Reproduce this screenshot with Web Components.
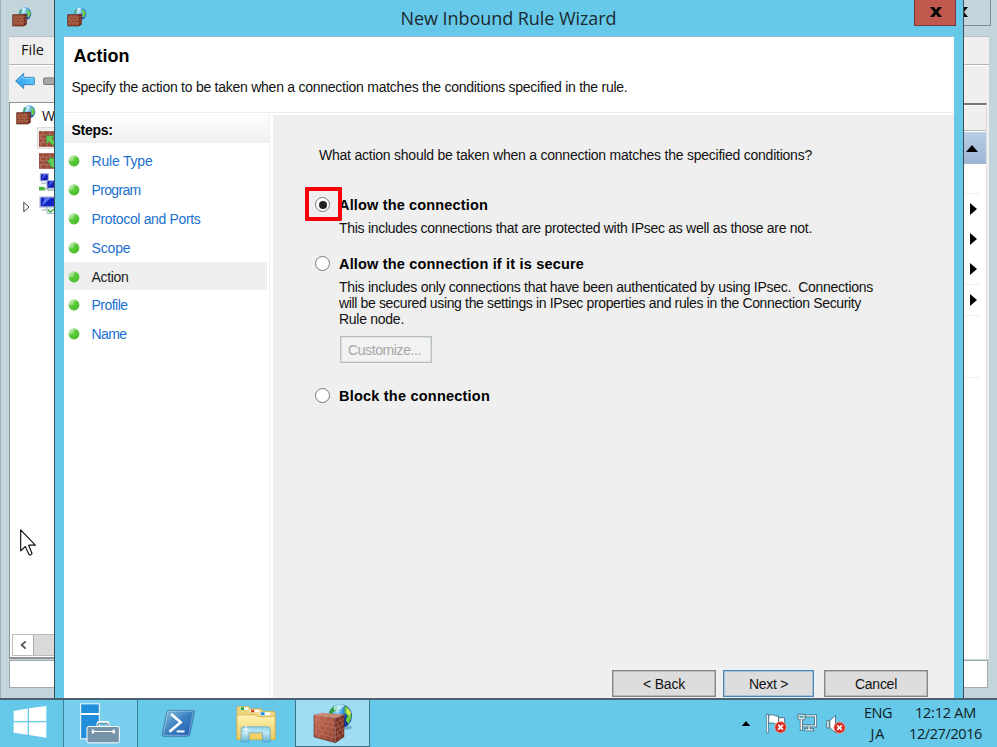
<!DOCTYPE html>
<html lang="en">
<head>
<meta charset="utf-8">
<title>New Inbound Rule Wizard</title>
<style>
html,body{margin:0;padding:0;width:997px;height:747px;overflow:hidden;background:#c3d4db;font-family:"Liberation Sans",Arial,sans-serif;font-size:14px;color:#111}
</style>
</head>
<body>
<desk-top></desk-top>
<script>
const define = (name, html, after) => {
  const t = document.createElement('template');
  t.innerHTML = html;
  customElements.define(name, class extends HTMLElement {
    connectedCallback() {
      if (this.shadowRoot) return;
      this.attachShadow({ mode: 'open' }).appendChild(t.content.cloneNode(true));
      if (after) after(this, this.shadowRoot);
    }
  });
};

/* One line of text, tracked so that it fills the width given in "w". */
define('fit-text', `<style>:host{display:inline-block;white-space:pre;line-height:1.15}</style><slot></slot>`, el => {
  const w = parseFloat(el.getAttribute('w'));
  el.style.letterSpacing = '0px';
  const n = el.textContent.length;
  const natural = el.getBoundingClientRect().width;
  if (w && natural) el.style.letterSpacing = ((w - natural) / n).toFixed(4) + 'px';
});

/* Icons */
const icons = {
  wall: `<svg viewBox="0 0 60 60"><defs><radialGradient id="g" cx=".35" cy=".3" r=".7"><stop offset="0" stop-color="#d4f2ff"/><stop offset=".55" stop-color="#4aa6ea"/><stop offset="1" stop-color="#1f4fb8"/></radialGradient></defs>
    <circle cx="39" cy="20" r="19" fill="url(#g)"/><path d="M22 12q3-6 9-7l2 5-5 4-2 7-4 1z" fill="#4aa57a"/><path d="M47 7q9 6 9 15l-5 10-5-4 2-8-4-6z" fill="#6fce4c"/><path d="M29 5q7-4 13-1l-2 5-9 2z" fill="#e8fbff" opacity=".7"/>
    <path d="M2 23l34-1 8-2v31l-8 6H2z" fill="#94452f"/><path d="M36 22l8-2v31l-8 6z" fill="#6b2d22"/>
    <path d="M2 30h34l8-2M2 39h34l8-3M2 48h34l8-4M12 23v7M25 23v7M7 30v9M19 30v9M30 30v9M12 39v9M25 39v9M7 48v8M19 48v8M30 48v8" stroke="#c98c78" stroke-width="1.3" fill="none"/><path d="M2 23h34M2 23v34h34l8-6" stroke="#5b2018" stroke-width="2" fill="none"/></svg>`,
  firewall: `<svg viewBox="336 20 125 125"><defs><radialGradient id="g" cx=".35" cy=".25"><stop offset="0" stop-color="#d8f7ff"/><stop offset=".4" stop-color="#4fb3ef"/><stop offset="1" stop-color="#10329d"/></radialGradient><linearGradient id="b" x2="1" y2="1"><stop offset="0" stop-color="#c9705a"/><stop offset="1" stop-color="#8e3f30"/></linearGradient></defs>
    <ellipse cx="434" cy="96" rx="22" ry="6" fill="#4c8ba5" opacity=".6"/><circle cx="420" cy="62" r="35" fill="url(#g)"/>
    <path d="M388 50q6-16 22-22l4 9-7 10-9 3-3 11-9 2z" fill="#2f9d3c"/><path d="M433 31q22 10 21 34l-9 21-9-12 6-13-9-9z" fill="#6bc83a"/><path d="M440 36l12 15-5 10-8-9z" fill="#d5ec55"/><path d="M400 34q18-13 34-3l-12 10-20 4z" fill="#d8f8ff" opacity=".75"/>
    <path d="M342 58l64 10v73l-64-17z" fill="url(#b)"/><path d="M406 68l26-11v66l-26 18z" fill="#7c3327"/><path d="M342 58l24-6 66 5-26 11z" fill="#c58a76"/>
    <path d="M342 71l64 12 26-13M342 84l64 14 26-14M342 98l64 14 26-15M342 111l64 15 26-16M357 60v14M375 63v14M393 66v15M349 73v13M366 76v14M384 80v14M398 82v14M357 87v15M375 91v15M393 95v15M349 100v13M366 103v14M384 108v14M398 111v14M357 115v13M375 119v14M393 124v14M419 62v15M426 74v14M413 80v15M419 91v15M427 100v14M413 109v14M419 118v14" stroke="#c98a76" stroke-width="1.3" fill="none"/><path d="M342 58v66l64 17 26-18" stroke="#4d1a13" stroke-width="1.5" fill="none"/></svg>`,
  back: `<svg viewBox="0 0 60 54"><defs><linearGradient id="a" x2="1"><stop offset="0" stop-color="#2d9ce8"/><stop offset="1" stop-color="#59c8fa"/></linearGradient></defs><path d="M2 27L26 4v12h30q2 0 2 2v18q0 2-2 2H26v12z" fill="url(#a)" stroke="#2b78b8" stroke-width="2.5" stroke-linejoin="round"/><path d="M9 26L24 12v7h30" fill="none" stroke="#a3e2ff" stroke-width="2"/></svg>`,
  fwd: `<svg viewBox="0 0 40 30"><rect x="2" y="3" width="46" height="22" rx="4" fill="#a6a6a6" stroke="#6d6d6d" stroke-width="3"/></svg>`,
  inb: `<svg viewBox="0 0 48 48"><rect width="48" height="48" fill="#9b4b3a"/><path d="M0 1h48M0 12h48M0 23h48M0 35h48M0 47h48M12 1v11M32 1v11M5 12v11M22 12v11M12 23v12M32 23v12M5 35v12M24 35v12" stroke="#c99482" stroke-width="1.6"/><path d="M22 14h24l-7 8 11 13-8 9-12-13-8 8z" fill="#5fcc52" stroke="#2b7f2b" stroke-width="1.5"/></svg>`,
  outb: `<svg viewBox="0 0 48 48"><rect width="48" height="48" fill="#9b4b3a"/><path d="M0 1h48M0 12h48M0 23h48M0 35h48M0 47h48M12 1v11M32 1v11M5 12v11M22 12v11M12 23v12M32 23v12M5 35v12M24 35v12" stroke="#c99482" stroke-width="1.6"/><path d="M36 12L24 27l8 2 2 12 16 5V22z" fill="#5fcc52" stroke="#2b7f2b" stroke-width="1.5"/></svg>`,
  nets: `<svg viewBox="0 0 48 56"><rect x="4" y="2" width="24" height="21" fill="#1420b8" stroke="#a9b4d8" stroke-width="3"/><path d="M8 18L13 4h10z" fill="#4d66ee"/><path d="M6 28h18v5H6z" fill="#bfc6cf"/><rect x="24" y="22" width="26" height="23" fill="#1420b8" stroke="#a9b4d8" stroke-width="3"/><path d="M28 40l6-16h10z" fill="#4d66ee"/><path d="M0 41h17v11H0z" fill="#49b53c"/><path d="M17 47h12M26 51h20" stroke="#9aa" stroke-width="4"/></svg>`,
  mon: `<svg viewBox="0 0 48 54"><rect x="3" y="3" width="50" height="30" fill="#1626c4" stroke="#b5bedd" stroke-width="4"/><path d="M8 30L18 5h18z" fill="#5a76f2"/><path d="M12 38h34v7H6z" fill="#cfd4da"/><rect x="24" y="33" width="26" height="19" fill="#e6f3ed" stroke="#7aa" stroke-width="2"/><path d="M27 41l7 7 16-12" stroke="#46a846" stroke-width="4" fill="none"/></svg>`,
  start: `<svg viewBox="0 0 102 98"><path d="M1 15l43-7v38H1zM48 7l53-7v46H48zM1 50h43v38L1 82zM48 50h53v47l-53-8z" fill="#fff"/></svg>`,
  server: `<svg viewBox="0 0 120 122"><path d="M2 2h56v29H2zM2 34h56v73H2z" fill="#218edb" stroke="#fff" stroke-width="3"/><path d="M54 72v-9q0-5 5-5h20q5 0 5 5v9" fill="none" stroke="#fff" stroke-width="9"/><path d="M54 72v-7q0-4 4-4h22q4 0 4 4v7" fill="none" stroke="#6d8ea6" stroke-width="4"/><rect x="21" y="70" width="97" height="49" rx="5" fill="#7594aa" stroke="#fff" stroke-width="3"/><path d="M38 85h64" stroke="#fff" stroke-width="3"/><path d="M33 85l9-6v12zM107 85l-9-6v12z" fill="#fff"/><path d="M38 78v14M102 78v14" stroke="#fff" stroke-width="3"/></svg>`,
  ps: `<svg viewBox="0 0 105 88"><defs><linearGradient id="p" x2="1" y2="1"><stop offset="0" stop-color="#8fc2de"/><stop offset=".5" stop-color="#3a80c0"/><stop offset="1" stop-color="#2058b0"/></linearGradient></defs><path d="M23 4h73q6 0 5 6L87 77q-1 6-7 6H8q-6 0-5-6L17 9q1-5 6-5z" fill="url(#p)" stroke="#3c7fae" stroke-width="2.5"/><path d="M25 7h69q4 0 3 4L84 75q-1 5-5 5H11q-5 0-4-5L20 11q1-4 5-4z" fill="none" stroke="#b9dcf0" stroke-width="1.5"/><path d="M30 15l29 25-34 29" fill="none" stroke="#fff" stroke-width="8"/><path d="M47 68h24" stroke="#fff" stroke-width="6"/></svg>`,
  folder: `<svg viewBox="0 0 120 112"><defs><linearGradient id="f" x2="0" y2="1"><stop offset="0" stop-color="#fff2b3"/><stop offset="1" stop-color="#edcb5a"/></linearGradient><linearGradient id="s" x2="0" y2="1"><stop offset="0" stop-color="#8ad6f5"/><stop offset=".4" stop-color="#bfe9fa"/><stop offset="1" stop-color="#5db4e2"/></linearGradient></defs>
    <path d="M2 22V5q0-4 4-4h32l5 7h33l5 8h33q4 0 4 4v79H2z" fill="#efd57c" stroke="#c4a24a" stroke-width="2"/><path d="M12 4h25v8H12z" fill="#fff"/><path d="M14 4h10v8H14z" fill="#13ae3c"/><path d="M42 11h28v8H42z" fill="#fff"/><path d="M45 11h10v8H45z" fill="#d8442a"/><path d="M71 19h32v9H71z" fill="#fff"/><path d="M74 19h12v9H74z" fill="#2291e0"/>
    <path d="M2 31q0-4 4-4h52l6 5h50q4 0 4 4v63q0 3-3 3H5q-3 0-3-3z" fill="url(#f)" stroke="#cda746" stroke-width="2"/><path d="M15 106V72q0-9 9-9h70q9 0 9 9v34q0 3-3 3H83q-3 0-3-3V81H39v25q0 3-3 3H18q-3 0-3-3z" fill="url(#s)" stroke="#4a9ac8" stroke-width="2" opacity=".94"/><path d="M30 48l2 19 10 3-10 3-2 19-2-19-10-3 10-3z" fill="#fff" opacity=".85"/></svg>`,
  flag: `<svg viewBox="0 0 62 62"><path d="M4 5v53" stroke="#fff" stroke-width="5"/><path d="M1 3h6v56H1z" fill="none" stroke="#3f6475" stroke-width="2"/><path d="M8 7q10-4 17 0 6 4 12 2v23q-7 3-13-1-7-4-16 0z" fill="#fff" stroke="#3f6475" stroke-width="2.5"/><path d="M37 14h18v20H38z" fill="#fff" stroke="#3f6475" stroke-width="2.5"/><circle cx="43" cy="42" r="17" fill="#d92b20" stroke="#f5b5ac" stroke-width="2"/><path d="M36 35l14 14M50 35L36 49" stroke="#fff" stroke-width="5"/></svg>`,
  net: `<svg viewBox="0 0 60 56"><path d="M21 8h35v30H14V22" fill="none" stroke="#31596a" stroke-width="8"/><path d="M21 8h35v30H14V22" fill="none" stroke="#fff" stroke-width="4"/><path d="M36 38v11M22 50h29" stroke="#31596a" stroke-width="8"/><path d="M36 38v11M24 50h25" stroke="#fff" stroke-width="4"/><rect x="3" y="3" width="21" height="17" rx="3" fill="#fff" stroke="#31596a" stroke-width="2.5"/><path d="M8 8h11v6H8z" fill="#58b6d7" stroke="#31596a"/><path d="M13 20v32" stroke="#31596a" stroke-width="9"/><path d="M13 19v31" stroke="#fff" stroke-width="5"/></svg>`,
  sound: `<svg viewBox="0 0 62 60"><path d="M2 20h7v22H2zM11 20L28 4v52L11 42z" fill="#fff" stroke="#3f6475" stroke-width="2.5"/><circle cx="40" cy="41" r="17" fill="#d92b20" stroke="#f5b5ac" stroke-width="2"/><path d="M33 34l14 14M47 34L33 48" stroke="#fff" stroke-width="5"/></svg>`,
  up: `<svg viewBox="0 0 12 7"><path d="M0 7l6-7 6 7z" fill="#000"/></svg>`,
  right: `<svg viewBox="0 0 7 12"><path d="M0 0l7 6-7 6z" fill="#000"/></svg>`,
  expand: `<svg viewBox="0 0 7 12"><path d="M.8 1.2L6 6 .8 10.8z" fill="#fff" stroke="#444"/></svg>`,
  ball: `<svg viewBox="0 0 12 12"><defs><linearGradient id="l" x2=".8" y2="1"><stop offset=".1" stop-color="#d8f2d0"/><stop offset=".5" stop-color="#5ccc38"/><stop offset="1" stop-color="#48b32a"/></linearGradient></defs><circle cx="6" cy="6" r="5.4" fill="#56c736"/><path d="M6 .6A5.4 5.4 0 0 0 .6 6h5z" fill="#b6e7a5"/><circle cx="6" cy="6" r="5.2" fill="url(#l)" opacity=".65"/></svg>`,
  x: `<svg viewBox="0 0 12 10"><path d="M0 0h4l2 3 2-3h4L8 4.9 12 10H8L6 7l-2 3H0l4-5.1z" fill="#080808"/></svg>`,
  left: `<svg viewBox="0 0 8 10"><path d="M6.5.8L1.8 5l4.7 4.2" fill="none" stroke="#555" stroke-width="2"/></svg>`,
  cursor: `<svg viewBox="0 0 48 80"><path d="M2 2v63l14-13 11 24q5 4 9-3L26 48h20z" fill="#fff" stroke="#111" stroke-width="3.5" stroke-linejoin="round"/></svg>`
};
/* w / h set the drawn size, the name picks the artwork. */
define('ui-icon', `<style>:host{display:block;flex:none}svg{display:block;width:100%;height:100%}</style>`, (el, root) => {
  el.style.width = el.getAttribute('w') + 'px';
  el.style.height = el.getAttribute('h') + 'px';
  root.innerHTML += icons[el.getAttribute('name')];
});

define('push-button', `<style>
:host{display:flex;box-sizing:border-box;height:27px;align-items:center;justify-content:center;background:#dddddd;border:1px solid #868686;box-shadow:inset 0 0 0 .5px #999;color:#111;padding-top:2px}
:host([primary]){border-color:#4687bb;box-shadow:inset 0 0 0 .5px #78a7cc}
:host([disabled]){background:#f2f2f2;border-color:#b7bec1;color:#a6a6a6;box-shadow:inset 0 0 0 .5px #c6cbcd}
</style><slot></slot>`);

define('radio-mark', `<style>
:host{display:flex;flex:none;box-sizing:border-box;width:15px;height:15px;border:1.4px solid #777;border-radius:50%;background:#fff;align-items:center;justify-content:center}
:host([checked])::before{content:"";width:8px;height:8px;border-radius:50%;background:#222}
</style>`);

/* A radio choice: mark, bold caption and, below it, its description. */
define('rule-choice', `<style>
:host{display:grid;grid-template-columns:24px 1fr;align-items:start}
.cap{font-weight:bold;font-size:14.5px;color:#000;height:23px;padding-top:0;box-sizing:border-box}
.body{grid-column:2;display:flex;flex-direction:column;align-items:flex-start;line-height:16px}
</style><radio-mark></radio-mark><div class="cap"><slot name="cap"></slot></div><div class="body"><slot></slot></div>`, (el, root) => {
  if (el.hasAttribute('checked')) root.querySelector('radio-mark').setAttribute('checked', '');
});

define('wizard-step', `<style>
:host{display:flex;align-items:center;height:28.8px;margin-right:2px;padding:1px 0 0 4px;gap:11.5px;color:#1a6fd0;box-sizing:border-box}
:host([current]){background:#efefef;color:#222}
</style><ui-icon name="ball" w="12" h="12"></ui-icon><slot></slot>`);

define('wizard-window', `<style>
:host{display:flex;flex-direction:column;box-sizing:border-box;background:#66c9ea;border:solid #424b50;border-width:0 1px 0 1px}
.title{height:36px;flex:none;display:grid;grid-template-columns:160px 1fr 160px;padding:0 7px 0 12px;font-family:"Open Sans",sans-serif;font-size:18px;color:#1d2a30}
.title>ui-icon{margin-top:7px}
.title>span{text-align:center;padding:7px 6px 0 0;line-height:22px}
.close{justify-self:end;width:42px;height:26px;box-sizing:border-box;background:#c1584e;border:1px solid #713b3a;border-top:0;display:flex;align-items:center;justify-content:center}
.close ui-icon{margin:-2px 0 0 1px}
.client{flex:1;margin:0 9px;border-top:1px solid #8fc3d7;background:#fff;display:flex;flex-direction:column}
header{height:76px;box-sizing:border-box;padding:9px 0 0 7.5px;border-bottom:1px solid #eee}
header .h{font-weight:bold;font-size:18px;color:#000;padding-left:2px;height:33px;line-height:20px}
main{flex:1;display:grid;grid-template-columns:206px 1fr;column-gap:3px;padding-top:2px}
nav{border-right:1px solid #eee}
.steps{height:28px;box-sizing:border-box;padding:7px 0 0 7.5px;background:linear-gradient(#fdfdfd,#efefef);font-weight:bold;color:#000;margin-bottom:3.5px}
section{background:#efefef;padding:32px 26px 0 46px;display:flex;flex-direction:column;position:relative}
.choices{margin:34px 0 0 -4px;display:flex;flex-direction:column}
.buttons{margin-top:auto;margin-bottom:1px;display:flex;justify-content:flex-end;gap:7px}
.buttons push-button:last-child{margin-left:3px}
.mark{position:absolute;left:32px;top:72px;width:37px;height:34px;box-sizing:border-box;border:4px solid #fb0007;border-radius:1px}
</style>
<div class="title"><ui-icon name="wall" w="20" h="20"></ui-icon><span><fit-text w="216">New Inbound Rule Wizard</fit-text></span><div class="close"><ui-icon name="x" w="12" h="10"></ui-icon></div></div>
<div class="client">
<header><div class="h"><fit-text w="56">Action</fit-text></div><fit-text w="556">Specify the action to be taken when a connection matches the conditions specified in the rule.</fit-text></header>
<main>
<nav><div class="steps"><fit-text w="41">Steps:</fit-text></div>
<wizard-step><fit-text w="61">Rule Type</fit-text></wizard-step>
<wizard-step><fit-text w="49">Program</fit-text></wizard-step>
<wizard-step><fit-text w="109">Protocol and Ports</fit-text></wizard-step>
<wizard-step><fit-text w="39">Scope</fit-text></wizard-step>
<wizard-step current><fit-text w="37">Action</fit-text></wizard-step>
<wizard-step><fit-text w="36">Profile</fit-text></wizard-step>
<wizard-step><fit-text w="35">Name</fit-text></wizard-step>
</nav>
<section>
<fit-text w="493" style="align-self:flex-start">What action should be taken when a connection matches the specified conditions?</fit-text>
<div class="choices">
<rule-choice checked><fit-text slot="cap" w="149">Allow the connection</fit-text><fit-text w="473">This includes connections that are protected with IPsec as well as those are not.</fit-text></rule-choice>
<rule-choice style="margin-top:20px"><fit-text slot="cap" w="245">Allow the connection if it is secure</fit-text><fit-text w="534">This includes only connections that have been authenticated by using IPsec.  Connections</fit-text><fit-text w="522">will be secured using the settings in IPsec properties and rules in the Connection Security</fit-text><fit-text w="65">Rule node.</fit-text>
<push-button disabled style="width:92px;margin:9px 0 0 1px;padding:0 3px 0 0"><fit-text w="73">Customize...</fit-text></push-button></rule-choice>
<rule-choice style="margin-top:25px"><fit-text slot="cap" w="151">Block the connection</fit-text></rule-choice>
</div>
<div class="buttons"><push-button style="width:104px"><fit-text w="42">&lt; Back</fit-text></push-button><push-button primary style="width:91px"><fit-text w="39">Next &gt;</fit-text></push-button><push-button style="width:104px"><fit-text w="42">Cancel</fit-text></push-button></div>
<div class="mark"></div>
</section>
</main>
</div>`);

define('action-pane', `<style>
:host{display:flex;flex-direction:column;box-sizing:border-box;background:#fff;border-top:2px solid #767676;border-right:1px solid #ddd}
.head{height:24px;background:#efefef;border-bottom:1px solid #b5b5b5;flex:none;border-top:1px solid #fff}
.sel{height:32px;margin-top:1px;background:linear-gradient(#b9cfe8,#9cb4d3);display:flex;align-items:center;justify-content:flex-end;padding-right:8px;flex:none}
.row{box-sizing:border-box;margin-right:6px;border-bottom:1px solid #eee;display:flex;align-items:center;justify-content:flex-end;padding-right:3px;flex:none}
.n{border:0}
</style><div class="head"></div><div class="sel"><ui-icon name="up" w="12" h="7"></ui-icon></div>
<div class="row" style="height:30px"></div>
<div class="row n" style="height:30px"><ui-icon name="right" w="7" h="12"></ui-icon></div>
<div class="row n" style="height:30px"><ui-icon name="right" w="7" h="12"></ui-icon></div>
<div class="row" style="height:31px"><ui-icon name="right" w="7" h="12"></ui-icon></div>
<div class="row" style="height:31px"><ui-icon name="right" w="7" h="12"></ui-icon></div>
<div class="row" style="height:62px"></div>`);

define('tree-pane', `<style>
:host{display:flex;flex-direction:column;box-sizing:border-box;background:#fff;border:solid #8d9297;border-width:1px 0 2px 1px}
.root{display:flex;align-items:center;gap:6px;padding-left:6px;height:24px;font-family:"Open Sans",sans-serif}
.r{display:flex;height:22px;padding-left:29px;align-items:center}
.sel{background:#f0f0f0;box-shadow:inset 0 0 0 1px #ddd;margin-left:27px;padding:2px 0 0 2px;box-sizing:border-box}
.bar{margin-top:auto;height:20px;margin-left:2px;margin-bottom:1px;display:flex;border:1px solid #bbb;background:#fff}
.bar i{width:20px;display:flex;align-items:center;justify-content:center;border-right:1px solid #aaa}
.bar b{flex:1;background:#dadada}
</style><div class="root"><ui-icon name="wall" w="20" h="20"></ui-icon><span>W</span></div>
<div class="r sel"><ui-icon name="inb" w="16" h="16"></ui-icon></div>
<div class="r" style="height:24px"><ui-icon name="outb" w="16" h="16"></ui-icon></div>
<div class="r" style="height:19px"><ui-icon name="nets" w="16" h="19"></ui-icon></div>
<div class="r" style="padding-left:13px;gap:9px;height:25px"><ui-icon name="expand" w="7" h="12" style="margin-top:4px"></ui-icon><ui-icon name="mon" w="16" h="18"></ui-icon></div>
<div class="bar"><i><ui-icon name="left" w="7" h="10"></ui-icon></i><b></b></div>`);

define('console-window', `<style>
:host{display:flex;flex-direction:column;box-sizing:border-box;background:#c3d4db;border-left:1px solid #9fadb4;padding:0 8px 10px 8px}
.title{height:36px;flex:none;display:flex;justify-content:space-between;padding-left:3px}
.title ui-icon{margin-top:7px}
.close{width:50px;height:26px;box-sizing:border-box;border:solid #7f8d94;border-width:0 1px 1px;margin-right:-2px;display:flex;justify-content:center}
.close ui-icon{margin:7px 8px 0 0}
.menu{height:29px;box-sizing:border-box;background:#efefef;border-top:1px solid #b6c2c7;border-bottom:1px solid #b5b5b5;padding:4px 12px;font:14.5px/18px "Open Sans",sans-serif}
.tools{height:37px;background:#efefef;border-top:1px solid #fff;box-sizing:border-box;display:flex;gap:8px;padding:6px 6px}
.body{flex:1;display:flex;justify-content:space-between;background:#efefef}
tree-pane{width:46px}action-pane{width:26px;margin:1px 2px 0 0}
.status{height:28px;background:#fff;border:1px solid #a2a8ab;box-sizing:border-box;margin:1px 1px 0 0}
</style><div class="title"><ui-icon name="wall" w="20" h="20"></ui-icon><div class="close"><ui-icon name="x" w="12" h="10"></ui-icon></div></div>
<div class="menu"><fit-text w="23">File</fit-text></div>
<div class="tools"><ui-icon name="back" w="20" h="18"></ui-icon><ui-icon name="fwd" w="12" h="9" style="margin-top:5px;overflow:hidden"></ui-icon></div>
<div class="body"><tree-pane></tree-pane><action-pane></action-pane></div>
<div class="status"></div>`);

define('task-bar', `<style>
:host{display:flex;box-sizing:border-box;height:49px;background:#66c9ea;border-top:2px solid #48636f;font-family:"Open Sans",sans-serif;font-size:14.5px;color:#101d23}
.b{display:flex;align-items:center;justify-content:center;box-sizing:border-box;flex:none}
.tray{margin-left:auto;display:flex;align-items:center}
.two{display:flex;flex-direction:column;align-items:center;line-height:21px}
.two fit-text{line-height:21px}
</style>
<div class="b" style="width:63px;padding:0 3px 3px 0"><ui-icon name="start" w="34" h="32"></ui-icon></div>
<div class="b" style="width:75px;background:#78d0ee;border:solid #3f8199;border-width:0 1px;padding:0 2px 0 0"><ui-icon name="server" w="40" h="41"></ui-icon></div>
<div class="b" style="width:81px"><ui-icon name="ps" w="35" h="29"></ui-icon></div>
<div class="b" style="width:76px;padding:2px 3px 0 0"><ui-icon name="folder" w="40" h="37"></ui-icon></div>
<div class="b" style="width:75px;background:#a0dcf3;border:1px solid #3b7388;border-top:0"><ui-icon name="firewall" w="42" h="42"></ui-icon></div>
<div class="tray"><ui-icon name="up" w="10" h="5"></ui-icon><ui-icon name="flag" w="21" h="21" style="margin-left:15px"></ui-icon><ui-icon name="net" w="20" h="19" style="margin-left:10px;margin-top:-2px"></ui-icon><ui-icon name="sound" w="21" h="20" style="margin-left:9px"></ui-icon>
<div class="two" style="margin-left:17px;margin-top:-2px"><fit-text w="28">ENG</fit-text><fit-text w="15">JA</fit-text></div>
<div class="two" style="margin:-2px 15px 0 17px"><fit-text w="61">12:12 AM</fit-text><fit-text w="73">12/27/2016</fit-text></div></div>`);

define('desk-top', `<style>
:host{display:grid;grid-template-rows:698px 49px;width:997px;height:747px;position:relative;overflow:hidden}
wizard-window{position:absolute;left:54px;top:0;width:910px;height:698px}
.cursor{position:absolute;left:20px;top:529px}
</style><console-window></console-window><task-bar></task-bar><wizard-window></wizard-window><ui-icon class="cursor" name="cursor" w="16" h="27"></ui-icon>`);
</script>
</body>
</html>
